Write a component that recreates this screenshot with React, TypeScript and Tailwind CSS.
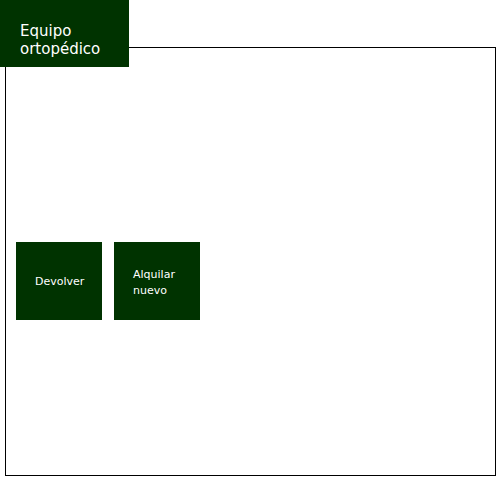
import React from "react";

export default function App() {
  return (
    <div
      className="relative w-[500px] h-[480px] bg-white"
      style={{ fontFamily: '"DejaVu Sans", sans-serif' }}
    >
      <div className="absolute left-0 top-0 w-[129px] h-[67px] bg-[#003300] text-white text-[15px] leading-[18px] pl-[20px] pt-[22px]">
        Equipo
        <br />
        ortopédico
      </div>
      <div className="ml-[5px] pt-[47px]">
        <div className="w-[491px] h-[429px] border border-black pl-[10px] pt-[194px]">
          <div className="flex gap-[12px]">
            <button className="w-[86px] h-[78px] bg-[#003300] text-white text-[11px] leading-[15px] flex items-center pl-[19px] text-left">
              Devolver
            </button>
            <button className="w-[86px] h-[78px] bg-[#003300] text-white text-[11px] leading-[16px] flex items-center pl-[19px] pt-[3px] text-left">
              <span>
                Alquilar
                <br />
                nuevo
              </span>
            </button>
          </div>
        </div>
      </div>
    </div>
  );
}
